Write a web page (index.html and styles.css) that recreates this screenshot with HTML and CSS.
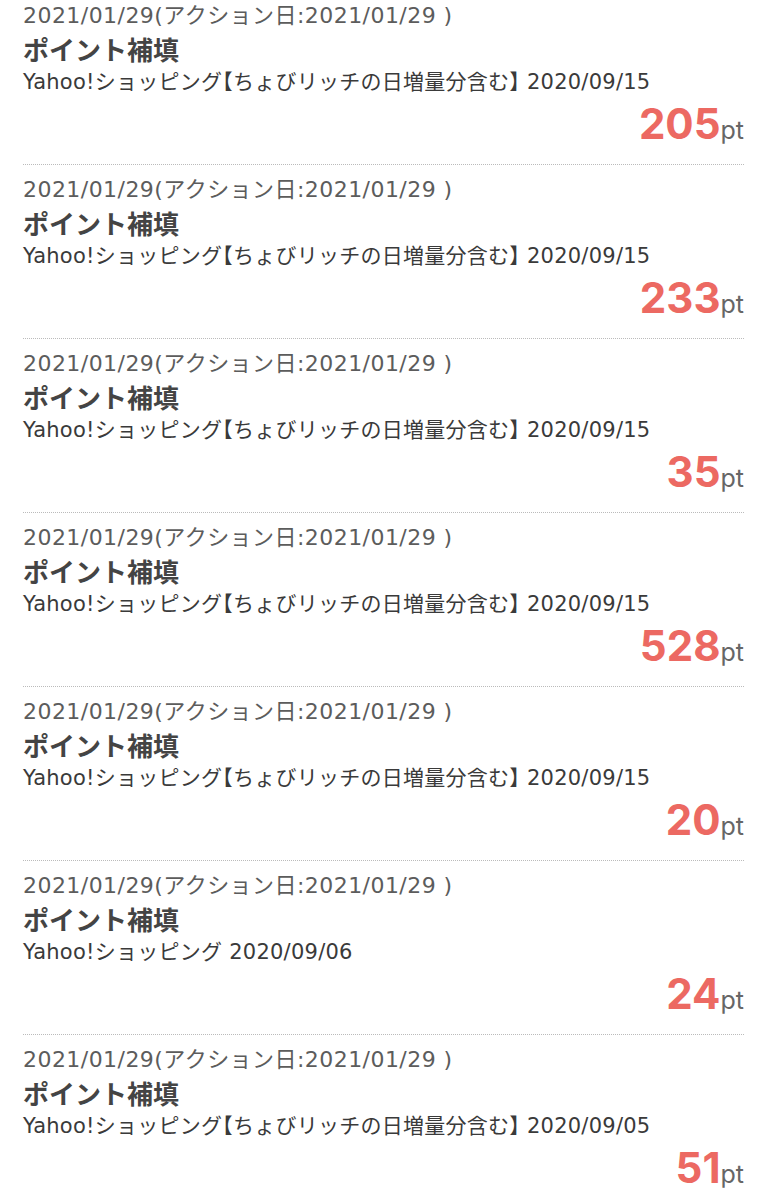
FILE: index.html
```html
<!DOCTYPE html>
<html lang="ja">
<head>
<meta charset="utf-8">
<title>ポイント履歴</title>
<link rel="stylesheet" href="styles.css">
</head>
<body>
<ul class="list">
  <li class="item">
    <p class="date">2021/01/29(アクション日:2021/01/29 )</p>
    <p class="title">ポイント補填</p>
    <p class="desc">Yahoo!ショッピング<span class="br">【</span>ちょびリッチの日増量分含む<span class="br">】</span> 2020/09/15</p>
    <p class="pts"><span class="num">205</span><span class="unit">pt</span></p>
  </li>
  <li class="item">
    <p class="date">2021/01/29(アクション日:2021/01/29 )</p>
    <p class="title">ポイント補填</p>
    <p class="desc">Yahoo!ショッピング<span class="br">【</span>ちょびリッチの日増量分含む<span class="br">】</span> 2020/09/15</p>
    <p class="pts"><span class="num">233</span><span class="unit">pt</span></p>
  </li>
  <li class="item">
    <p class="date">2021/01/29(アクション日:2021/01/29 )</p>
    <p class="title">ポイント補填</p>
    <p class="desc">Yahoo!ショッピング<span class="br">【</span>ちょびリッチの日増量分含む<span class="br">】</span> 2020/09/15</p>
    <p class="pts"><span class="num">35</span><span class="unit">pt</span></p>
  </li>
  <li class="item">
    <p class="date">2021/01/29(アクション日:2021/01/29 )</p>
    <p class="title">ポイント補填</p>
    <p class="desc">Yahoo!ショッピング<span class="br">【</span>ちょびリッチの日増量分含む<span class="br">】</span> 2020/09/15</p>
    <p class="pts"><span class="num">528</span><span class="unit">pt</span></p>
  </li>
  <li class="item">
    <p class="date">2021/01/29(アクション日:2021/01/29 )</p>
    <p class="title">ポイント補填</p>
    <p class="desc">Yahoo!ショッピング<span class="br">【</span>ちょびリッチの日増量分含む<span class="br">】</span> 2020/09/15</p>
    <p class="pts"><span class="num">20</span><span class="unit">pt</span></p>
  </li>
  <li class="item">
    <p class="date">2021/01/29(アクション日:2021/01/29 )</p>
    <p class="title">ポイント補填</p>
    <p class="desc">Yahoo!ショッピング 2020/09/06</p>
    <p class="pts"><span class="num">24</span><span class="unit">pt</span></p>
  </li>
  <li class="item">
    <p class="date">2021/01/29(アクション日:2021/01/29 )</p>
    <p class="title">ポイント補填</p>
    <p class="desc">Yahoo!ショッピング<span class="br">【</span>ちょびリッチの日増量分含む<span class="br">】</span> 2020/09/05</p>
    <p class="pts"><span class="num">51</span><span class="unit">pt</span></p>
  </li>
</ul>
</body>
</html>
```
FILE: styles.css
```css
html, body {
  margin: 0;
  padding: 0;
  background: #fff;
}
body {
  font-family: "DejaVu Sans", "Noto Sans CJK JP", sans-serif;
  color: #333;
}
.list {
  list-style: none;
  margin: 0;
  padding: 0 23px;
}
.item {
  padding: 9px 0 18px;
  border-bottom: 1px dotted #bbb;
}
.item:first-child {
  padding-top: 0;
}
.item p {
  margin: 0;
  white-space: nowrap;
}
.date {
  font-size: 22px;
  line-height: 31px;
  letter-spacing: 0.45px;
  color: #5c5c5c;
}
.title {
  font-family: "Noto Sans CJK JP", sans-serif;
  font-size: 26px;
  line-height: 35px;
  font-weight: bold;
  color: #444;
}
.desc {
  font-size: 21px;
  line-height: 33px;
  letter-spacing: 0.25px;
  color: #3a3a3a;
}
.br {
  font-feature-settings: "halt";
}
.pts {
  font-family: Inter, "Noto Sans", sans-serif;
  text-align: right;
  font-size: 42px;
  line-height: 44px;
  margin-top: 3px !important;
}
.num {
  font-weight: bold;
  color: #ec6962;
}
.unit {
  font-size: 25px;
  line-height: 1;
  color: #666;
}
```
